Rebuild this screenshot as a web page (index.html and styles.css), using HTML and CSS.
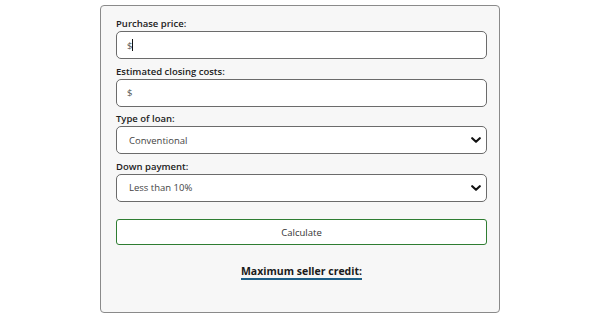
FILE: index.html
```html
<!DOCTYPE html>
<html lang="en">
<head>
<meta charset="utf-8">
<title>Seller credit calculator</title>
<link rel="stylesheet" href="styles.css">
</head>
<body>
<form class="calc">
  <div class="field">
    <label class="label" for="price">Purchase price:</label>
    <div class="control">
      <input class="input" id="price" type="text" value="$">
      <span class="caret"></span>
    </div>
  </div>
  <div class="field">
    <label class="label" for="closing">Estimated closing costs:</label>
    <div class="control">
      <input class="input" id="closing" type="text" value="$">
    </div>
  </div>
  <div class="field">
    <label class="label" for="loan">Type of loan:</label>
    <div class="control">
      <select class="input select" id="loan">
        <option>Conventional</option>
      </select>
      <svg class="chevron" viewBox="0 0 10 6" width="10" height="6" aria-hidden="true"><path d="M1.2 1.2 L5 4.8 L8.8 1.2" fill="none" stroke="#111" stroke-width="2.1" stroke-linecap="round" stroke-linejoin="round"/></svg>
    </div>
  </div>
  <div class="field">
    <label class="label" for="down">Down payment:</label>
    <div class="control">
      <select class="input select" id="down">
        <option>Less than 10%</option>
      </select>
      <svg class="chevron" viewBox="0 0 10 6" width="10" height="6" aria-hidden="true"><path d="M1.2 1.2 L5 4.8 L8.8 1.2" fill="none" stroke="#111" stroke-width="2.1" stroke-linecap="round" stroke-linejoin="round"/></svg>
    </div>
  </div>
  <button class="btn" type="button">Calculate</button>
  <div class="result"><span class="result-title">Maximum seller credit:</span></div>
</form>
</body>
</html>
```
FILE: styles.css
```css
* { box-sizing: border-box; }
body {
  margin: 0;
  background: #fff;
  font-family: "Open Sans", "Noto Sans", sans-serif;
  color: #222;
}
.calc {
  width: 400px;
  height: 308px;
  margin: 5px auto 0;
  padding: 11px 12px 0 15px;
  border: 1px solid #8a8a8a;
  border-radius: 4px;
  background: #f7f7f7;
  display: flex;
  flex-direction: column;
}
.field {
  display: flex;
  flex-direction: column;
  margin-bottom: 5.5px;
}
.label {
  font-size: 9.5px;
  font-weight: 600;
  line-height: 14px;
  color: #222;
}
.control { position: relative; }
.input {
  display: block;
  width: 100%;
  height: 28px;
  margin: 0;
  padding: 0 10px;
  border: 1px solid #6b6b6b;
  border-radius: 5px;
  background: #fff;
  font-family: inherit;
  font-size: 9.5px;
  color: #555;
  outline: none;
}
.select {
  appearance: none;
  -webkit-appearance: none;
  padding-left: 12px;
  color: #444;
}
.caret {
  position: absolute;
  left: 16px;
  top: 8px;
  width: 1px;
  height: 12px;
  background: #111;
}
.chevron {
  position: absolute;
  right: 6px;
  top: 11px;
  pointer-events: none;
}
.btn {
  margin-top: 12px;
  height: 26px;
  border: 1px solid #2f7d32;
  border-radius: 3px;
  background: #fff;
  font-family: inherit;
  font-size: 9.5px;
  color: #333;
  cursor: pointer;
}
.result {
  margin-top: 13px;
  text-align: center;
}
.result-title {
  display: inline-block;
  font-size: 10.5px;
  font-weight: 700;
  line-height: 14px;
  color: #1b1b1b;
  border-bottom: 2px solid #1d5e86;
}
```
